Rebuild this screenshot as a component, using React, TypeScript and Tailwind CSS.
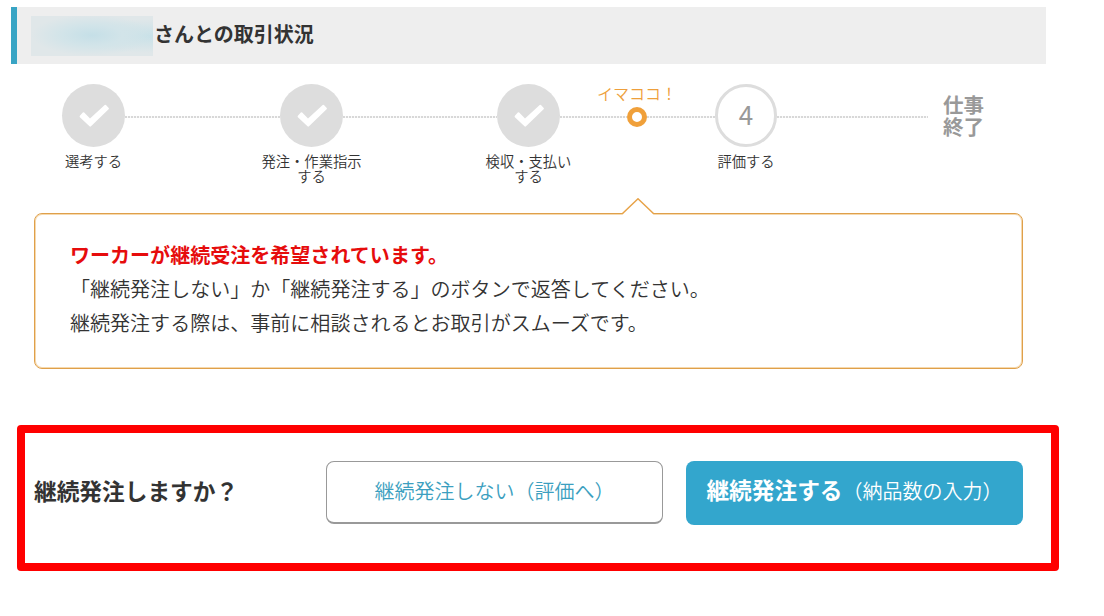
import type { ReactNode } from "react";
import clsx from "clsx";

function Check() {
  return (
    <svg width="63" height="63" viewBox="0 0 63 63" fill="none">
      <path
        d="M17.9 31.8L20.8 28.6Q21.5 27.9 22.2 28.6L28 34.4L42.7 21.1Q43.5 20.5 44.2 21.2L46.7 23.9Q47.3 24.6 46.6 25.3L29 42.3Q28.2 43 27.5 42.3L17.9 33.2Q17.2 32.5 17.9 31.8Z"
        fill="#fff"
      />
    </svg>
  );
}

function Line({ className }: { className: string }) {
  return (
    <div
      className={clsx(
        "mt-8 h-0.5 shrink-0 bg-[repeating-linear-gradient(90deg,#d8d8d8_0_2px,#fafafa_2px_3px)]",
        className
      )}
    />
  );
}

function Step({ done, lines, children }: { done?: boolean; lines: string[]; children: ReactNode }) {
  return (
    <div className={clsx("flex shrink-0 flex-col items-center", done ? "w-[63px]" : "w-[62px]")}>
      <div
        className={clsx(
          "flex h-[63px] w-full shrink-0 items-center justify-center rounded-full",
          done ? "bg-[#dddddd]" : "border-[3px] border-[#dddddd] bg-white"
        )}
      >
        {children}
      </div>
      <div className="mt-1.5 text-center text-[14.3px] leading-[15px] whitespace-nowrap">
        {lines.map((l) => (
          <div key={l}>{l}</div>
        ))}
      </div>
    </div>
  );
}

export default function App() {
  return (
    <div className="h-[616px] w-[1104px] overflow-hidden bg-white pt-[7px] font-['Noto_Sans_CJK_JP',sans-serif] font-[350] text-[#333333]">
      <h1 className="ml-[11px] flex h-[57px] w-[1035px] items-center border-l-[6px] border-[#38a4c4] bg-[#eeeeee] pl-3.5 text-xl font-bold">
        <span className="h-10 w-[122px] bg-[#e0e7e9] bg-[radial-gradient(ellipse_at_50%_48%,#c5dfe7_0%,#d2e4e9_35%,transparent_70%),radial-gradient(ellipse_at_100%_50%,#c8e1e8_0%,transparent_60%)]" />
        <span className="ml-px -mt-1 leading-6">さんとの取引状況</span>
      </h1>

      <div className="mt-5 flex h-[129px] items-start pl-[62px]">
        <Step done lines={["選考する"]}>
          <Check />
        </Step>
        <Line className="w-[155px]" />
        <Step done lines={["発注・作業指示", "する"]}>
          <Check />
        </Step>
        <Line className="w-[154px]" />
        <Step done lines={["検収・支払い", "する"]}>
          <Check />
        </Step>
        <Line className="w-[67px]" />
        <div className="flex w-5 shrink-0 flex-col items-center">
          <span className="text-base leading-[18px] whitespace-nowrap text-[#ee9f3c]">イマココ！</span>
          <span className="mt-[5px] size-5 rounded-full border-[5px] border-[#f0a03a] bg-white" />
        </div>
        <Line className="w-[68px]" />
        <Step lines={["評価する"]}>
          <span className="pb-1 text-[26px] leading-none font-normal text-[#999999]">4</span>
        </Step>
        <Line className="w-[151px]" />
        <div className="mt-2.5 ml-[15px] text-[20.5px] leading-[21.5px] font-bold text-[#999999]">
          仕事
          <br />
          終了
        </div>
      </div>

      <section className="relative ml-[34px] h-[156px] w-[989px] rounded-lg border border-[#dfa04a] pt-6 pl-[35px] text-[20.05px] leading-[34px] shadow-[inset_0_0_0_1px_#f6d9ae]">
        <svg className="absolute -top-4 left-[586px]" width="34" height="18" viewBox="0 0 34 18" fill="none">
          <path d="M1 16.5L17 0.5L33 16.5V18H1Z" fill="#fff" />
          <path d="M1 16L17 0.8L33 16" stroke="#e8a348" strokeWidth="1.5" />
        </svg>
        <p className="font-bold text-[#e60c0c]">ワーカーが継続受注を希望されています。</p>
        <p>「継続発注しない」か「継続発注する」のボタンで返答してください。</p>
        <p>継続発注する際は、事前に相談されるとお取引がスムーズです。</p>
      </section>

      <section className="mt-14 ml-[17px] flex h-[146px] w-[1042px] items-start rounded border-8 border-[#ff0000] pt-7 pl-[9px]">
        <h2 className="w-[292px] shrink-0 pt-3.5 text-[22.7px] leading-8 font-bold">継続発注しますか？</h2>
        <button className="h-[63px] w-[337px] shrink-0 rounded-lg border border-b-2 border-[#999999] bg-white pb-0.5 text-xl text-[#3c9fc0]">
          継続発注しない（評価へ）
        </button>
        <button className="ml-[23px] h-16 w-[337px] shrink-0 rounded-lg bg-[#33a6cd] pb-1.5 text-xl whitespace-nowrap text-white">
          <span className="text-[22.7px] font-bold">継続発注する</span>（納品数の入力）
        </button>
      </section>
    </div>
  );
}
